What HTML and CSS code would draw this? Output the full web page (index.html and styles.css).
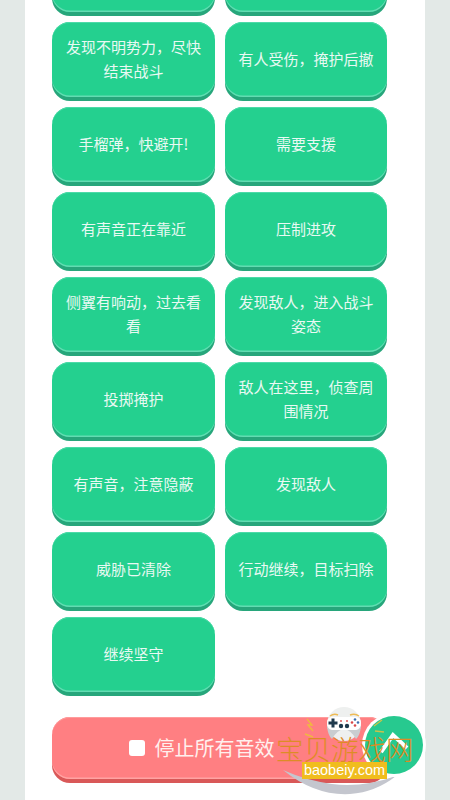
FILE: index.html
```html
<!DOCTYPE html>
<html lang="zh-CN">
<head>
    <meta charset="UTF-8">
    <meta name="viewport" content="width=device-width, initial-scale=1.0">
    <title>音效</title>
    <link rel="stylesheet" href="styles.css">
</head>
<body>
    <div class="panel">
        <div class="sound-grid">
            <div class="sound-btn">&nbsp;</div>
            <div class="sound-btn">&nbsp;</div>
            <div class="sound-btn">发现不明势力，尽快结束战斗</div>
            <div class="sound-btn">有人受伤，掩护后撤</div>
            <div class="sound-btn">手榴弹，快避开!</div>
            <div class="sound-btn">需要支援</div>
            <div class="sound-btn">有声音正在靠近</div>
            <div class="sound-btn">压制进攻</div>
            <div class="sound-btn">侧翼有响动，过去看看</div>
            <div class="sound-btn">发现敌人，进入战斗姿态</div>
            <div class="sound-btn">投掷掩护</div>
            <div class="sound-btn">敌人在这里，侦查周围情况</div>
            <div class="sound-btn">有声音，注意隐蔽</div>
            <div class="sound-btn">发现敌人</div>
            <div class="sound-btn">威胁已清除</div>
            <div class="sound-btn">行动继续，目标扫除</div>
            <div class="sound-btn">继续坚守</div>
        </div>
        <div class="stop-btn"><span class="stop-icon"></span>停止所有音效</div>
    </div>

    <div class="watermark">
        <svg class="wm-art" viewBox="0 0 160 100" width="160" height="100">
            <!-- swoosh -->
            <path d="M13 70 Q45 96 80 94 Q106 92 126 76 Q92 88 62 84 Q35 80 13 70Z" fill="#c4c6ce"/>
            <!-- badge -->
            <path d="M126 76 Q148 72 155 50 Q146 64 126 72Z" fill="#27a67b"/>
            <circle cx="124" cy="45" r="32" fill="white"/>
            <circle cx="124" cy="45" r="29" fill="#27c98f"/>
            <path d="M111 52 L123 35 L137 48" fill="none" stroke="white" stroke-width="4"/>
            <!-- gamepad -->
            <circle cx="74" cy="24" r="17" fill="#eef0ef"/>
            <path d="M57 26 Q58 36 62 39 Q67 30 74 29 Q81 30 86 39 Q90 36 91 26Z" fill="#c9cdd0"/>
            <path d="M62 17 H86 Q91 18 91 23 Q91 29 86 30 H62 Q57 29 57 23 Q57 18 62 17Z" fill="white"/>
            <path d="M61.500 18.500 h3 v3 h3 v3 h-3 v3 h-3 v-3 h-3 v-3 h3z" fill="#1f3a4d"/>
            <circle cx="71" cy="26" r="2.200" fill="#1f3a4d"/>
            <circle cx="77" cy="26" r="2.200" fill="#1f3a4d"/>
            <circle cx="71" cy="21" r="0.900" fill="#d8484a"/>
            <circle cx="77" cy="21" r="0.900" fill="#d8484a"/>
            <circle cx="85" cy="19.500" r="1.300" fill="#3b6fb0"/>
            <circle cx="82" cy="22.500" r="1.300" fill="#d8484a"/>
            <circle cx="88" cy="22.500" r="1.300" fill="#3b6fb0"/>
            <circle cx="85" cy="25.500" r="1.300" fill="#d8484a"/>
            <!-- sparks -->
            <path d="M60 16 Q64 13 68 15 M80 15 Q85 13 89 16" fill="none" stroke="#eebb55" stroke-width="1.400"/>
            <path d="M37 19 L42 25 L38 25 L43 31" fill="none" stroke="#f0b840" stroke-width="1.400"/>
            <path d="M35 34 L43 37" fill="none" stroke="#f0b840" stroke-width="1.400"/>
            <path d="M104 26 L112 20 M105 31 L114 32" fill="none" stroke="#c9c24a" stroke-width="1.400"/>
        </svg>
        <div class="wm-title">宝贝游戏网</div>
        <div class="wm-url">baobeiy.com</div>
    </div>
</body>
</html>
```

FILE: styles.css
```css
* {
    box-sizing: border-box;
}
body {
    margin: 0;
    height: 800px;
    overflow: hidden;
    background-color: #e3e9e7;
    font-family: "Noto Sans CJK SC", "Liberation Sans", sans-serif;
}
.panel {
    width: 400px;
    height: 800px;
    margin: 0 auto;
    padding: 0 38px 0 27px;
    background-color: white;
    overflow: hidden;
}
.sound-grid {
    display: grid;
    grid-template-columns: 163px 162px;
    grid-auto-rows: 75px;
    column-gap: 10px;
    row-gap: 10px;
    margin-top: -63px;
}
.sound-btn {
    display: flex;
    justify-content: center;
    align-items: center;
    padding: 0 12px 2px;
    text-align: center;
    font-size: 15px;
    line-height: 24px;
    color: #e9f9f3;
    border-radius: 18px;
    background: #24d08f;
    box-shadow: 0 4px 0 #27a67b, inset 0 -1.5px 0 #62dcb2, inset 0 1px 0 #4cdaa8;
}
.stop-btn {
    display: flex;
    justify-content: center;
    align-items: center;
    height: 62px;
    margin-top: 25px;
    padding: 0 36px 1px 0;
    font-size: 20px;
    color: #fff0ee;
    border-radius: 18px;
    background: #ff7f82;
    box-shadow: 0 4px 0 #d95858, inset 0 -1.5px 0 #ffa3a3, inset 0 1px 0 #ff9c9c;
}
.stop-icon {
    width: 16px;
    height: 16px;
    margin-right: 10px;
    border-radius: 3px;
    background-color: white;
}
.watermark {
    position: absolute;
    left: 270px;
    top: 700px;
    width: 160px;
    height: 100px;
}
.wm-art {
    position: absolute;
    left: 0;
    top: 0;
}
.wm-title {
    position: absolute;
    left: 6px;
    top: 35px;
    font-size: 27.5px;
    font-weight: 300;
    line-height: 26px;
    white-space: nowrap;
    color: #dd8c26;
}
.wm-url {
    position: absolute;
    left: 32px;
    top: 62px;
    width: 85px;
    height: 17px;
    text-align: center;
    font-family: "Liberation Sans", sans-serif;
    font-size: 14.5px;
    line-height: 17px;
    color: white;
    background-color: #f0bd1e;
}
```
